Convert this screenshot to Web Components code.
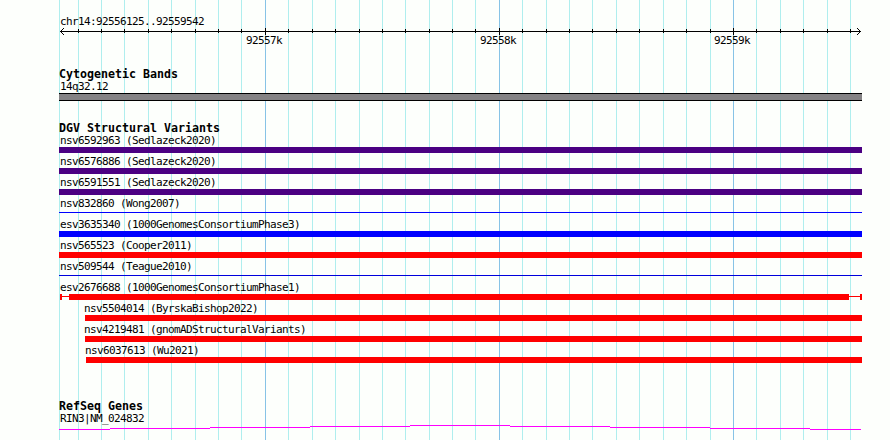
<!DOCTYPE html>
<html lang="en"><head><meta charset="utf-8"><title>chr14:92556125..92559542</title>
<style>html,body{margin:0;background:#fdfffc}</style></head><body>
<genome-view>
<scale-ruler label="chr14:92556125..92559542"></scale-ruler>
<track-section id="cyto" heading="Cytogenetic Bands"><feature-row label="14q32.12" kind="band"></feature-row></track-section>
<track-section id="dgv" heading="DGV Structural Variants">
<feature-row label="nsv6592963 (Sedlazeck2020)" color="#4b0082"></feature-row>
<feature-row label="nsv6576886 (Sedlazeck2020)" color="#4b0082"></feature-row>
<feature-row label="nsv6591551 (Sedlazeck2020)" color="#4b0082"></feature-row>
<feature-row label="nsv832860 (Wong2007)" kind="thin" color="#0000ff"></feature-row>
<feature-row label="esv3635340 (1000GenomesConsortiumPhase3)" color="#0000ff"></feature-row>
<feature-row label="nsv565523 (Cooper2011)" color="#ff0000"></feature-row>
<feature-row label="nsv509544 (Teague2010)" kind="thin" color="#0000dc"></feature-row>
<feature-row label="esv2676688 (1000GenomesConsortiumPhase1)" kind="range" color="#ff0000"></feature-row>
<feature-row label="nsv5504014 (ByrskaBishop2022)" start="26" shift="-1" color="#ff0000"></feature-row>
<feature-row label="nsv4219481 (gnomADStructuralVariants)" start="26" shift="-1" color="#ff0000"></feature-row>
<feature-row label="nsv6037613 (Wu2021)" start="27" shift="-1" color="#ff0000"></feature-row>
</track-section>
<track-section id="genes" heading="RefSeq Genes"><feature-row label="RIN3|NM_024832" kind="gene"></feature-row></track-section>
</genome-view>
<script>
const LINES=[59,78,101,124,148,171,195,218,241,265,288,312,335,359,382,405,429,452,475,499,522,546,569,592,616,639,663,686,710,733,756,780,803,827,850];
const MAJOR={265:'92557k',499:'92558k',733:'92559k'};
const TEXT="font:11px/12px 'DejaVu Sans Mono','Liberation Mono',monospace;letter-spacing:-.622px;white-space:pre;color:#000;";

class GenomeView extends HTMLElement{
  constructor(){super();
    this.attachShadow({mode:'open'}).innerHTML=`<style>
    :host{display:block;position:relative;width:890px;height:440px;overflow:hidden;background:#fdfffc}
    svg{position:absolute;inset:0;shape-rendering:crispEdges}
    main{position:relative;display:flex;flex-direction:column;box-sizing:border-box;width:862px;padding-left:59px}
    ::slotted(#cyto){margin-bottom:20px}::slotted(#dgv){margin-bottom:34px}
    </style><svg width="890" height="440">${LINES.map(x=>`<rect x="${x}" width="1" height="440" fill="${MAJOR[x]?'#87c3e6':'#afeeee'}"/>`).join('')}</svg><main><slot></slot></main>`;
  }
}
class ScaleRuler extends HTMLElement{
  connectedCallback(){
    const ticks=LINES.slice(1).map(x=>MAJOR[x]?`<rect x="${x-59}" y="1" width="1" height="7"/>`:`<rect x="${x-59}" y="2" width="1" height="4"/>`).join('');
    this.attachShadow({mode:'open'}).innerHTML=`<style>
    :host{display:block;height:68px;box-sizing:border-box;padding-top:16px}
    span{${TEXT}display:block}
    svg{display:block;margin-top:-1px;shape-rendering:crispEdges}
    .nums{display:grid;grid-template-columns:188px 234px 234px 1fr;margin-top:-1px}
    .nums :first-child{grid-column:2}
    .nums span{margin-left:-1px}
    .title{padding-left:1px}
    </style><span class="title">${this.getAttribute('label')}</span><svg width="803" height="9"><rect x="1" y="4" width="801" height="1"/>${ticks}
    <path d="M2 3h1v1h-1zM3 2h1v1h-1zM4 1h1v1h-1zM2 5h1v1h-1zM3 6h1v1h-1zM4 7h1v1h-1zM800 3h1v1h-1zM799 2h1v1h-1zM798 1h1v1h-1zM800 5h1v1h-1zM799 6h1v1h-1zM798 7h1v1h-1z"/></svg>
    <div class="nums">${Object.values(MAJOR).map(n=>`<span>${n}</span>`).join('')}</div>`;
  }
}
class TrackSection extends HTMLElement{
  connectedCallback(){
    this.attachShadow({mode:'open'}).innerHTML=`<style>
    :host{display:flex;flex-direction:column}
    h2{margin:0;height:13px;font:bold 11.63px/13px 'DejaVu Sans Mono','Liberation Mono',monospace;white-space:pre;color:#000}
    </style><h2>${this.getAttribute('heading')}</h2><slot></slot>`;
  }
}
class FeatureRow extends HTMLElement{
  connectedCallback(){
    const kind=this.getAttribute('kind')||'bar',start=+(this.getAttribute('start')||0),shift=+(this.getAttribute('shift')||1);
    const glyph={
      range:'<div class="range"><i></i><b></b><u></u><b></b><i></i></div>',
      gene:'<svg width="803" height="5" fill="#f0f"><path d="M0 4h51v1H0zM51 3h100v1H51zM151 2h100v1H151zM251 1h100v1H251zM351 0h100v1H351zM451 1h100v1H451zM551 2h100v1H551zM651 3h100v1H651zM751 4h51v1H751z"/></svg>'
    }[kind]||`<div class="${kind}"></div>`;
    this.attachShadow({mode:'open'}).innerHTML=`<style>
    :host{display:block;height:21px;padding-left:${start}px;--c:${this.getAttribute('color')||'#000'}}
    span{${TEXT}display:block;padding-left:${Math.max(shift,0)}px;margin-left:${Math.min(shift,0)}px}
    .bar{height:6px;background:var(--c)}
    .thin{height:1px;margin-top:2px;background:var(--c)}
    .band{height:6px;border:solid #000;border-width:1px 0;background:#848284}
    .range{display:grid;grid-template-columns:2px 7px 780px 11px 2px;height:6px;padding-left:1px}
    .range i,.range u{background:var(--c)}
    .range b{height:1px;margin-top:2px;background:var(--c)}
    svg{display:block;shape-rendering:crispEdges}
    </style><span>${this.getAttribute('label')}</span>${glyph}`;
  }
}
customElements.define('genome-view',GenomeView);
customElements.define('scale-ruler',ScaleRuler);
customElements.define('track-section',TrackSection);
customElements.define('feature-row',FeatureRow);
</script></body></html>
